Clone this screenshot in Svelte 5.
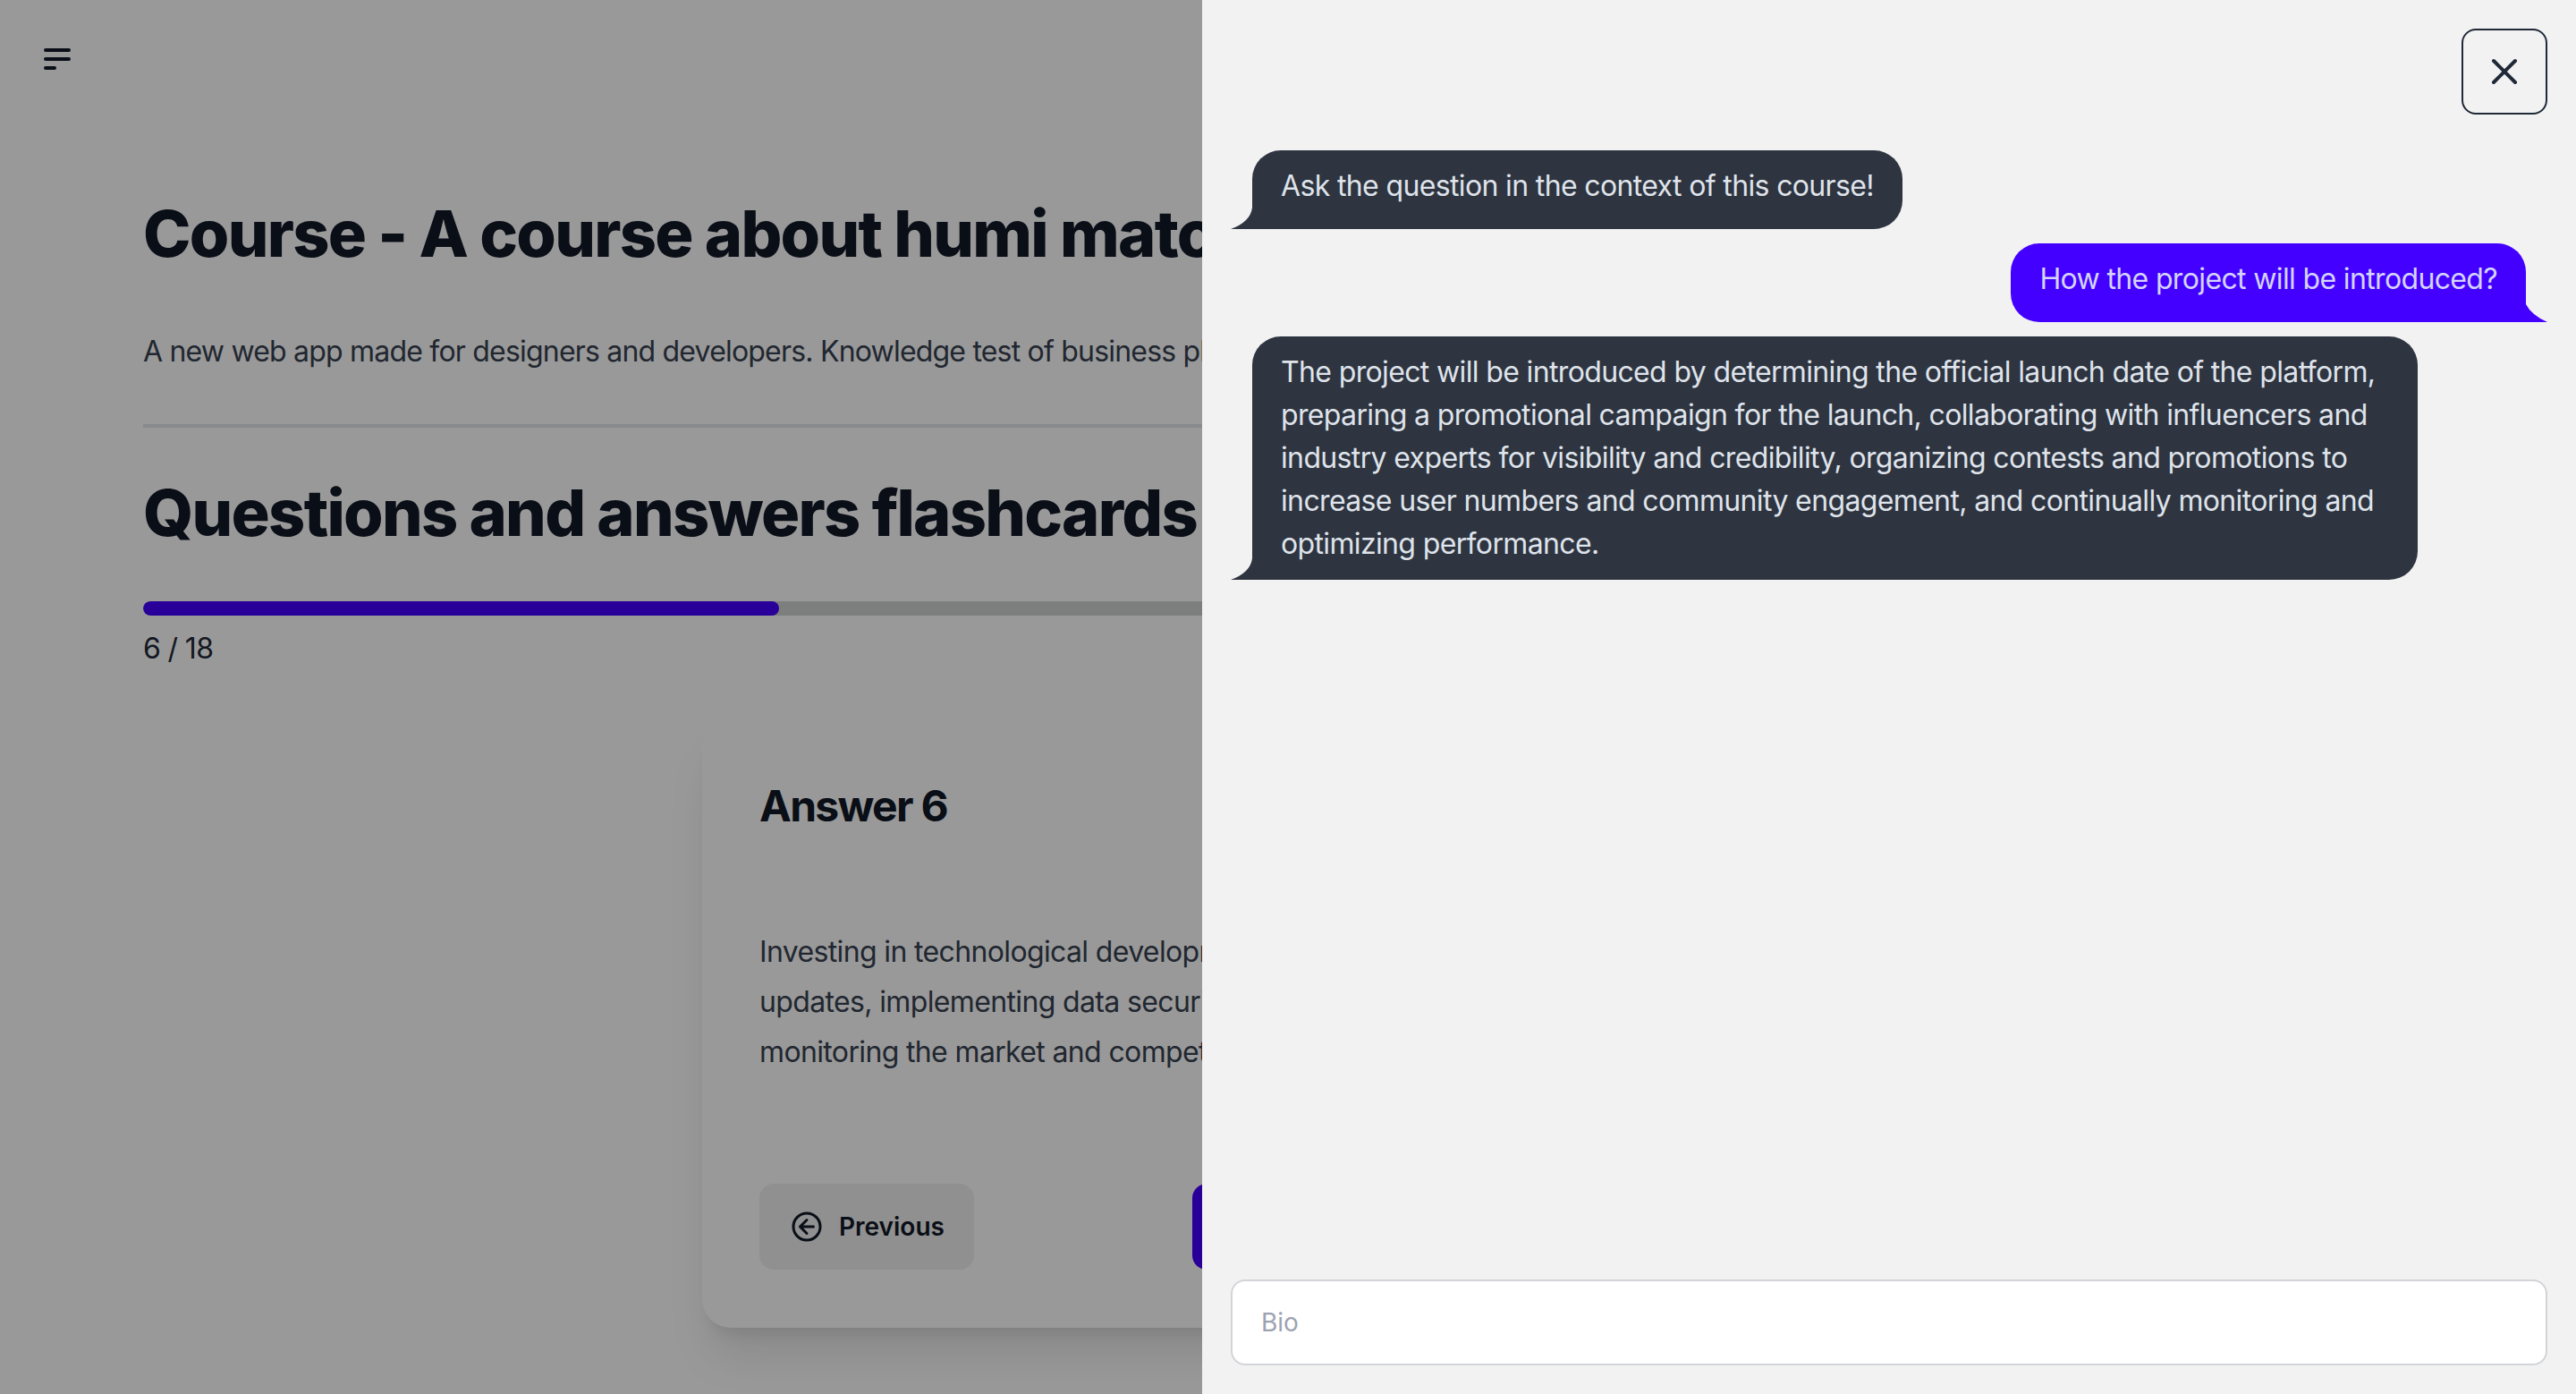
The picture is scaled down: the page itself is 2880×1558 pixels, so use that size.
<script lang="ts">
  const messages = [
    { side: 'start', text: 'Ask the question in the context of this course!' },
    { side: 'end', text: 'How the project will be introduced?' },
    {
      side: 'start',
      text: 'The project will be introduced by determining the official launch date of the platform, preparing a promotional campaign for the launch, collaborating with influencers and industry experts for visibility and credibility, organizing contests and promotions to increase user numbers and community engagement, and continually monitoring and optimizing performance.'
    }
  ]

  let draft = $state('')
</script>

<div class="page">
  <header class="topbar">
    <button class="menu-btn" aria-label="Open menu">
      <svg width="40" height="30" viewBox="0 0 40 30" fill="none">
        <path d="M9 4h26M9 14h26M9 24h10" stroke="currentColor" stroke-width="4" stroke-linecap="round"/>
      </svg>
    </button>
  </header>

  <main class="content">
    <h1>Course - A course about humi matching platforms</h1>
    <p class="lead">A new web app made for designers and developers. Knowledge test of business plans and product launches for modern teams.</p>
    <hr />
    <h2>Questions and answers flashcards</h2>
    <div class="progress"><div class="progress-fill" style="width: 27.78%"></div></div>
    <div class="count">6 / 18</div>

    <section class="card">
      <h3>Answer 6</h3>
      <p class="answer">
        Investing in technological development and regular platform<br />
        updates, implementing data security measures, and continually<br />
        monitoring the market and competition for new opportunities.
      </p>
      <div class="actions">
        <button class="btn">
          <svg class="btn-icon" width="36" height="36" viewBox="0 0 24 24" fill="none">
            <circle cx="12" cy="12" r="10" stroke="currentColor" stroke-width="2"/>
            <path d="M12 7l-5 5 5 5M7 12h10" stroke="currentColor" stroke-width="2" stroke-linecap="round" stroke-linejoin="round"/>
          </svg>
          Previous
        </button>
        <button class="btn primary">Next</button>
      </div>
    </section>
  </main>

  <div class="overlay"></div>

  <aside class="drawer">
    <div class="drawer-head">
      <button class="close-btn" aria-label="Close">
        <svg width="48" height="48" viewBox="0 0 24 24" fill="none">
          <path d="M6 18L18 6M6 6l12 12" stroke="currentColor" stroke-width="2" stroke-linecap="round" stroke-linejoin="round"/>
        </svg>
      </button>
    </div>

    <div class="chat-list">
      {#each messages as msg}
        <div class="chat {msg.side}">
          <div class="bubble">{msg.text}</div>
        </div>
      {/each}
    </div>

    <input class="chat-input" type="text" placeholder="Bio" bind:value={draft} />
  </aside>
</div>

<style>
  :global(body) {
    margin: 0;
    background: #fff;
    font-family: Inter, "Liberation Sans", sans-serif;
    color: #1f2937;
  }

  button {
    font-family: inherit;
    cursor: pointer;
  }

  .page {
    position: relative;
    height: 1558px;
    overflow: hidden;
  }

  /* ── Page behind the drawer ── */
  .topbar {
    height: 221px;
    box-sizing: border-box;
    padding: 52px 0 0 42px;
  }

  .menu-btn {
    display: block;
    padding: 0;
    border: none;
    background: none;
    color: #111827;
    line-height: 0;
  }

  .content {
    padding: 0 160px;
  }

  h1, h2, h3 {
    margin: 0;
    color: #111827;
    white-space: nowrap;
  }

  h1, h2 {
    font-size: 72px;
    line-height: 80px;
    font-weight: 800;
    letter-spacing: -0.024em;
  }

  .lead {
    margin: 68px 0 0;
    font-size: 32px;
    line-height: 48px;
    letter-spacing: -0.025em;
    color: #374151;
    white-space: nowrap;
  }

  hr {
    border: none;
    height: 4px;
    margin: 57px 0 55px;
    background: #e5e7eb;
  }

  .progress {
    height: 16px;
    margin-top: 59px;
    border-radius: 8px;
    background: #d1d2d3;
    overflow: hidden;
  }

  .progress-fill {
    height: 100%;
    border-radius: 8px;
    background: #4400ff;
  }

  .count {
    margin-top: 13px;
    font-size: 32px;
    line-height: 48px;
    letter-spacing: -0.02em;
  }

  .card {
    box-sizing: border-box;
    width: 1310px;
    height: 681px;
    margin: 54px auto 0;
    padding: 66px 64px 0;
    border-radius: 32px;
    background: #fff;
    box-shadow: 0 40px 50px -10px rgba(0,0,0,0.1), 0 16px 20px -12px rgba(0,0,0,0.1);
  }

  h3 {
    font-size: 48px;
    line-height: 64px;
    font-weight: 700;
    letter-spacing: -0.035em;
  }

  .answer {
    margin: 103px 0 0;
    font-size: 32px;
    line-height: 56px;
    letter-spacing: -0.02em;
    color: #374151;
    white-space: nowrap;
  }

  .actions {
    display: flex;
    gap: 244px;
    margin-top: 119px;
  }

  .btn {
    display: flex;
    align-items: center;
    gap: 18px;
    width: 240px;
    height: 96px;
    padding: 0 0 0 35px;
    border: none;
    border-radius: 16px;
    background: #f0f0f0;
    color: #111827;
    font-size: 28px;
    font-weight: 600;
    white-space: nowrap;
  }

  .btn-icon {
    flex-shrink: 0;
  }

  .btn.primary {
    background: #4400ff;
    color: #fff;
  }

  .overlay {
    position: absolute;
    inset: 0;
    background: rgba(0,0,0,0.4);
  }

  /* ── Chat drawer ── */
  .drawer {
    position: absolute;
    top: 0;
    right: 0;
    bottom: 0;
    width: 1536px;
    box-sizing: border-box;
    padding: 32px;
    display: flex;
    flex-direction: column;
    background: #f2f2f2;
  }

  .drawer-head {
    display: flex;
    justify-content: flex-end;
  }

  .close-btn {
    display: flex;
    align-items: center;
    justify-content: center;
    width: 96px;
    height: 96px;
    padding: 0;
    border: 2px solid #1f2937;
    border-radius: 16px;
    background: none;
    color: #1f2937;
  }

  .chat-list {
    flex: 1;
    margin-top: 32px;
  }

  .chat {
    display: flex;
    padding: 8px 0;
  }

  .chat.start {
    padding-left: 24px;
  }

  .chat.end {
    padding-right: 24px;
    justify-content: flex-end;
  }

  .bubble {
    position: relative;
    box-sizing: border-box;
    max-width: 90%;
    min-height: 88px;
    padding: 16px 32px;
    border-radius: 32px;
    font-size: 32px;
    line-height: 48px;
    letter-spacing: -0.02em;
  }

  .bubble::before {
    content: '';
    position: absolute;
    bottom: 0;
    width: 24px;
    height: 24px;
    background: inherit;
  }

  .start .bubble {
    border-bottom-left-radius: 0;
    background: #2e3440;
    color: #dfe3ea;
  }

  .start .bubble::before {
    left: -24px;
    clip-path: path('M24 0 Q22 16 0 24 L24 24 Z');
  }

  .end .bubble {
    border-bottom-right-radius: 0;
    background: #4400ff;
    color: #d4d4ff;
  }

  .end .bubble::before {
    right: -24px;
    clip-path: path('M0 4 Q6 16 24 24 L0 24 Z');
  }

  .chat-input {
    box-sizing: border-box;
    width: 100%;
    height: 96px;
    padding: 0 32px;
    border: 2px solid rgba(31,41,55,0.2);
    border-radius: 16px;
    background: #fff;
    font-family: inherit;
    font-size: 28px;
    color: #1f2937;
    outline: none;
  }

  .chat-input::placeholder {
    color: #9ca3af;
  }
</style>
